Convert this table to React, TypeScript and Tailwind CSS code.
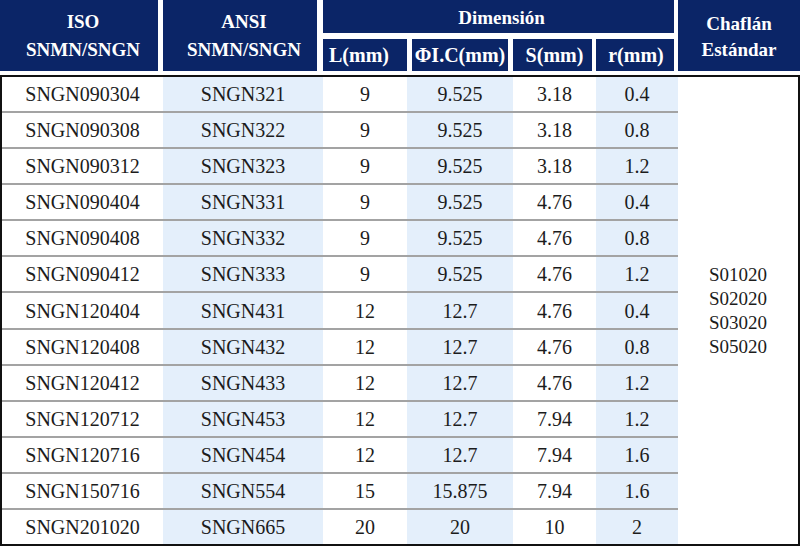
const rows = [
  ["SNGN090304", "SNGN321", "9", "9.525", "3.18", "0.4"],
  ["SNGN090308", "SNGN322", "9", "9.525", "3.18", "0.8"],
  ["SNGN090312", "SNGN323", "9", "9.525", "3.18", "1.2"],
  ["SNGN090404", "SNGN331", "9", "9.525", "4.76", "0.4"],
  ["SNGN090408", "SNGN332", "9", "9.525", "4.76", "0.8"],
  ["SNGN090412", "SNGN333", "9", "9.525", "4.76", "1.2"],
  ["SNGN120404", "SNGN431", "12", "12.7", "4.76", "0.4"],
  ["SNGN120408", "SNGN432", "12", "12.7", "4.76", "0.8"],
  ["SNGN120412", "SNGN433", "12", "12.7", "4.76", "1.2"],
  ["SNGN120712", "SNGN453", "12", "12.7", "7.94", "1.2"],
  ["SNGN120716", "SNGN454", "12", "12.7", "7.94", "1.6"],
  ["SNGN150716", "SNGN554", "15", "15.875", "7.94", "1.6"],
  ["SNGN201020", "SNGN665", "20", "20", "10", "2"],
];

const chamfers = ["S01020", "S02020", "S03020", "S05020"];

// body column widths and shading
const cols = [
  { w: "w-[161px]", bg: "bg-white" },
  { w: "w-[160px]", bg: "bg-[#e4effb]" },
  { w: "w-[84px]", bg: "bg-white" },
  { w: "w-[106px]", bg: "bg-[#e4effb]" },
  { w: "w-[83px]", bg: "bg-white" },
  { w: "w-[82px]", bg: "bg-[#e4effb]" },
];

export default function App() {
  return (
    <div className="w-[800px] h-[548px] bg-white text-[#1c1c1c] overflow-hidden font-['Liberation_Serif','Times_New_Roman','DejaVu_Serif',serif]">
      {/* Header */}
      <div className="flex h-[71px] text-white font-bold text-[19px]">
        <div className="w-[158px] pl-[8px] bg-[#0b2567] flex flex-col items-center justify-center leading-[28px]">
          <span>ISO</span>
          <span>SNMN/SNGN</span>
        </div>
        <div className="w-[154px] ml-[5px] pl-[8px] bg-[#0b2567] flex flex-col items-center justify-center leading-[28px]">
          <span>ANSI</span>
          <span>SNMN/SNGN</span>
        </div>
        <div className="w-[351px] ml-[6px] flex flex-col">
          <div className="h-[33px] pt-[3px] pl-[6px] bg-[#0b2567] flex items-center justify-center">
            Dimensión
          </div>
          <div className="flex h-[32px] mt-[6px] text-[20px]">
            <div className="w-[84px] pr-[12px] bg-[#0b2567] flex items-center justify-center">L(mm)</div>
            <div className="w-[96px] ml-[5px] bg-[#0b2567] flex items-center justify-center">ΦI.C(mm)</div>
            <div className="w-[79px] ml-[5px] pl-[4px] bg-[#0b2567] flex items-center justify-center">S(mm)</div>
            <div className="w-[78px] ml-[4px] pl-[2px] bg-[#0b2567] flex items-center justify-center">r(mm)</div>
          </div>
        </div>
        <div className="w-[122px] ml-[4px] pt-[2px] bg-[#0b2567] flex flex-col items-center justify-center leading-[26px]">
          <span>Chaflán</span>
          <span>Estándar</span>
        </div>
      </div>

      {/* Body */}
      <div className="mt-[4px] h-[471px] border-2 border-[#111] flex text-[20px]">
        <div className="flex flex-col w-[676px]">
          {rows.map((r, i) => (
            <div
              key={r[0]}
              className={`flex flex-1 ${i > 0 ? "border-t-2 border-[#a3a3a3]" : ""}`}
            >
              {r.map((v, j) => (
                <div
                  key={j}
                  className={`${cols[j].w} ${cols[j].bg} flex items-center justify-center`}
                >
                  {v}
                </div>
              ))}
            </div>
          ))}
        </div>
        <div className="flex-1 flex flex-col items-center justify-center text-[19px] leading-[24px]">
          {chamfers.map((c) => (
            <span key={c}>{c}</span>
          ))}
        </div>
      </div>
    </div>
  );
}
